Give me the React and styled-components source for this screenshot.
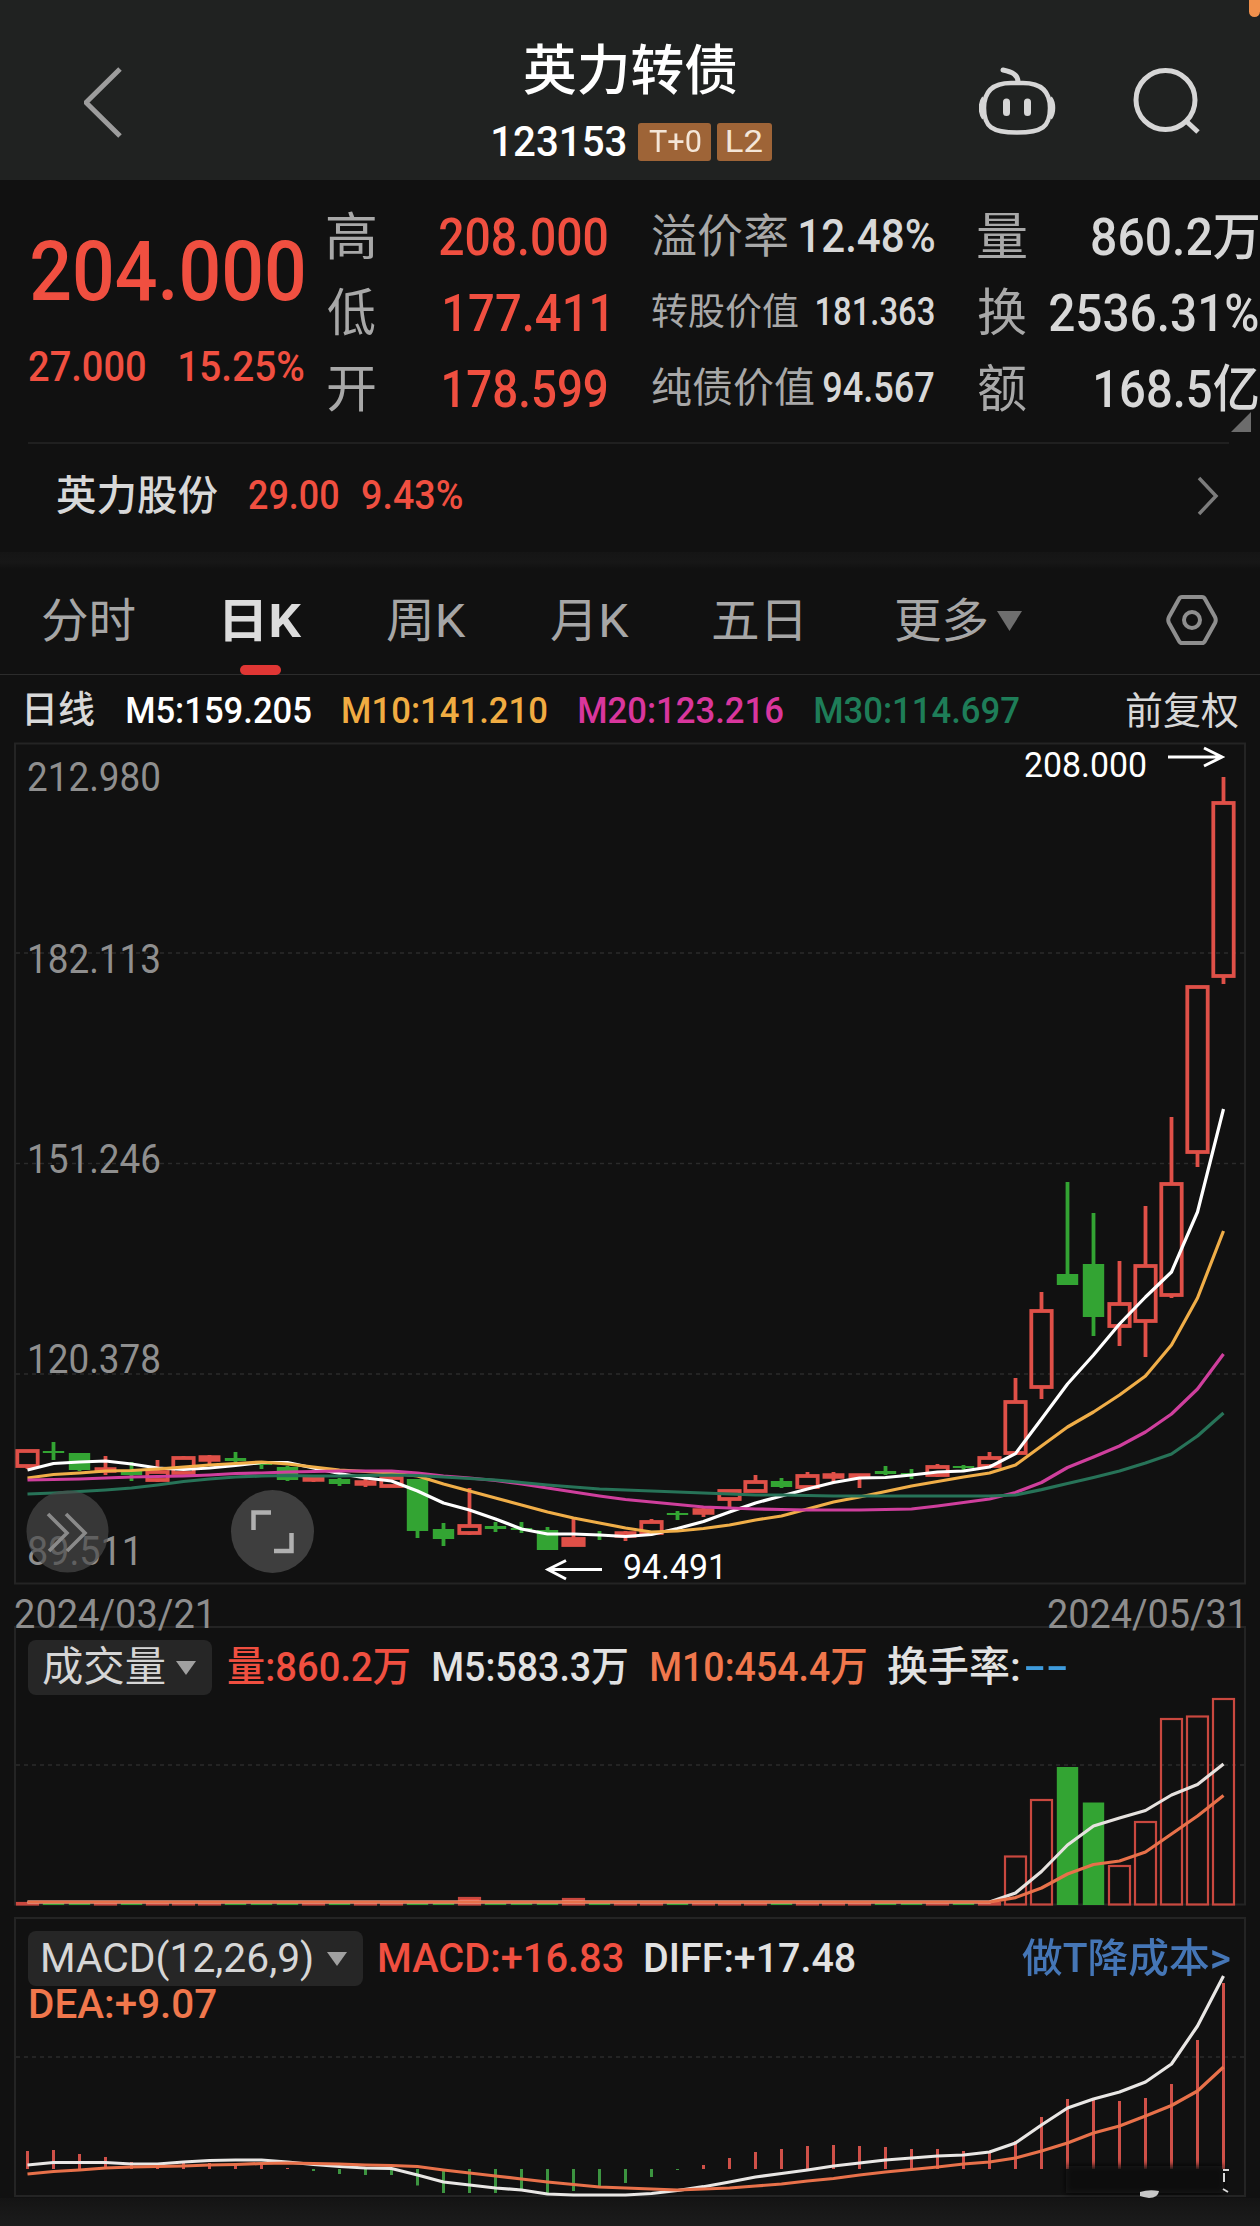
import React from 'react';
import styled, { createGlobalStyle } from "styled-components";

const FONT = 'Roboto, "Noto Sans CJK SC", sans-serif';
const RED = "#f04f40";
const CANDLE_RED = "#df5048";
const GREEN = "#33a433";
const ORANGE = "#f0774c";

const GlobalStyle = createGlobalStyle`
    body {
        margin: 0;
        background: #111111;
        font-family: ${FONT};
    }
`;

const Page = styled.div`
    width: 1260px;
    height: 2226px;
    overflow: hidden;
    display: flex;
    flex-direction: column;
    background: #111111;
    color: #d8d8d8;
`;

const FitBox = styled.span`
    display: block;
    flex: none;
    width: ${p => p.$width}px;
    margin-left: ${p => p.$ml || 0}px;
    color: ${p => p.$color || "inherit"};
    font-size: ${p => p.$size}px;
    font-weight: ${p => p.$weight};
    line-height: ${p => Math.round(p.$size * 1.1)}px;
    white-space: nowrap;
`;

const FitText = styled.span`
    display: block;
    transform-origin: left center;
`;

const pen = document.createElement("canvas").getContext("2d");

// condenses the text so that its ink fills exactly `width`
const Fit = ({ children, size, width, weight = 400, color, ml }) => {
    pen.font = `${weight} ${size}px ${FONT}`;
    const m = pen.measureText(children);
    const left = m.actualBoundingBoxLeft;
    const scale = width / (left + m.actualBoundingBoxRight);
    return (
        <FitBox $size={size} $width={width} $weight={weight} $color={color} $ml={ml}>
            <FitText style={{ transform: `scaleX(${scale}) translateX(${left}px)` }}>{children}</FitText>
        </FitBox>
    );
};

/* header */

const Header = styled.header`
    position: relative;
    height: 180px;
    flex: none;
    box-sizing: border-box;
    padding: 0 60px 0 84px;
    display: flex;
    justify-content: space-between;
    background: #202221;
`;

const HeaderIcon = styled.svg`
    margin-top: 60px;
    flex: none;
`;

const HeaderTitle = styled.div`
    display: flex;
    flex-direction: column;
    align-items: flex-start;
    margin-left: 164px;
    padding-top: 42px;
    color: #ffffff;
`;

const CodeRow = styled.div`
    display: flex;
    align-items: center;
    margin-top: 17px;
`;

const Badge = styled.div`
    width: ${p => p.$width}px;
    height: 38px;
    margin-left: ${p => p.$ml}px;
    border-radius: 3px;
    display: flex;
    align-items: center;
    justify-content: center;
    background: #9e6437;
    color: #f4e6d8;
`;

const HeaderTools = styled.div`
    display: flex;
    gap: 76px;
`;

const EdgeMark = styled.div`
    position: absolute;
    top: 0;
    right: 0;
    width: 11px;
    height: 17px;
    border-radius: 0 0 6px 6px;
    background: #f0904c;
`;

/* quote */

const Quote = styled.section`
    height: 262px;
    flex: none;
    display: flex;
    position: relative;
`;

const PriceCol = styled.div`
    width: 275px;
    margin: 46px 24px 0 29px;
    display: flex;
    flex-direction: column;
    gap: 27px;
    color: ${RED};
`;

const PriceRow = styled.div`
    display: flex;
    justify-content: space-between;
`;

const StatCol = styled.div`
    width: ${p => p.$width}px;
    margin-right: ${p => p.$mr || 0}px;
    padding-top: ${p => p.$pt || 20}px;
`;

const StatRow = styled.div`
    height: 76px;
    display: flex;
    align-items: center;
    justify-content: space-between;
`;

const Corner = styled.svg`
    position: absolute;
    right: 9px;
    bottom: 10px;
`;

const StockRow = styled.section`
    height: 110px;
    flex: none;
    box-sizing: border-box;
    margin: 0 31px 0 28px;
    padding: 0 10px 4px 29px;
    border-top: 2px solid #202020;
    display: flex;
    align-items: center;
`;

const Push = styled.div`
    flex: 1;
`;

const Band = styled.div`
    height: 17px;
    flex: none;
    background: linear-gradient(#151515, #171717 60%, #111111);
`;

/* tabs */

const Tabs = styled.nav`
    height: 106px;
    flex: none;
    box-sizing: border-box;
    padding: 0 42px 0 43px;
    border-bottom: 1px solid #2c2c2c;
    display: flex;
    align-items: center;
    color: #a6a6a6;
`;

const Tab = styled.div`
    position: relative;
    height: 100%;
    box-sizing: border-box;
    padding-bottom: 2px;
    display: flex;
    align-items: center;
    margin-left: ${p => p.$ml || 0}px;
    color: ${p => (p.$active ? "#dcdcdc" : "inherit")};
    &::after {
        content: "";
        display: ${p => (p.$active ? "block" : "none")};
        position: absolute;
        bottom: -1px;
        left: calc(50% - 24px);
        width: 41px;
        height: 10px;
        border-radius: 5px;
        background: #e03634;
    }
`;

const TabSetting = styled.svg`
    margin-bottom: 3px;
`;

const Indicators = styled.div`
    height: 67px;
    flex: none;
    box-sizing: border-box;
    padding: 4px 22px 0 27px;
    display: flex;
    align-items: center;
`;

/* charts */

const Panel = styled.section`
    display: grid;
    flex: none;
    margin-top: ${p => p.$mt || 0}px;
    & > * {
        grid-area: 1 / 1;
    }
`;

const Chart = styled.svg`
    display: block;
    flex: none;
    overflow: visible;
    width: 1260px;
    height: ${p => p.$height}px;
`;

const Dates = styled.div`
    height: 41px;
    flex: none;
    box-sizing: border-box;
    padding: 8px 19px 0 15px;
    display: flex;
    justify-content: space-between;
    color: #8d8d8d;
`;

const Legend = styled.div`
    padding: 14px 30px 0 28px;
`;

const LegendRow = styled.div`
    height: ${p => p.$height}px;
    display: flex;
    align-items: center;
`;

const Picker = styled.div`
    width: ${p => p.$width}px;
    height: 55px;
    box-sizing: border-box;
    padding: 0 16px 0 15px;
    border-radius: 8px;
    display: flex;
    align-items: center;
    justify-content: space-between;
    background: #262626;
    color: #d6d6d6;
`;

const Footer = styled.div`
    flex: 1;
    background: linear-gradient(#141414, #1c1c1c);
`;

const Down = ({ w, h, color }) => (
    <svg width={w} height={h}><path d={`M0 0H${w}L${w / 2} ${h}Z`} fill={color} /></svg>
);

// [up, high, bodyTop, bodyBottom, low]
const candles = [
    [1, 1451, 1451, 1466, 1469], [0, 1442, 1451, 1453, 1460], [0, 1453, 1453, 1470, 1471],
    [1, 1456, 1468, 1472, 1475], [0, 1462, 1471, 1475, 1481], [1, 1460, 1472, 1480, 1482],
    [1, 1456, 1458, 1473, 1474], [1, 1455, 1456, 1461, 1465], [0, 1452, 1458, 1461, 1462],
    [0, 1461, 1463, 1465, 1469], [0, 1466, 1467, 1480, 1481], [1, 1477, 1477, 1481, 1482],
    [0, 1478, 1479, 1484, 1486], [1, 1478, 1481, 1485, 1487], [1, 1475, 1478, 1486, 1487],
    [0, 1479, 1479, 1531, 1538], [0, 1523, 1529, 1539, 1546], [1, 1488, 1526, 1533, 1535],
    [0, 1522, 1526, 1529, 1532], [0, 1522, 1528, 1530, 1533], [0, 1527, 1530, 1550, 1550],
    [1, 1517, 1539, 1545, 1545], [0, 1531, 1534, 1536, 1540], [1, 1531, 1532, 1537, 1541],
    [1, 1519, 1522, 1533, 1534], [0, 1511, 1513, 1515, 1520], [1, 1506, 1509, 1514, 1517],
    [1, 1490, 1491, 1499, 1507], [1, 1475, 1482, 1491, 1492], [0, 1478, 1481, 1487, 1488],
    [1, 1472, 1476, 1487, 1489], [1, 1472, 1474, 1478, 1482], [1, 1474, 1474, 1478, 1488],
    [0, 1466, 1471, 1474, 1475], [0, 1469, 1473, 1475, 1479], [1, 1464, 1467, 1475, 1477],
    [0, 1465, 1466, 1468, 1471], [1, 1452, 1458, 1466, 1467], [1, 1378, 1402, 1453, 1455],
    [1, 1292, 1311, 1387, 1399], [0, 1182, 1274, 1285, 1285], [0, 1213, 1264, 1317, 1336],
    [1, 1261, 1304, 1326, 1346], [1, 1206, 1266, 1321, 1357], [1, 1117, 1184, 1295, 1298],
    [1, 987, 987, 1152, 1167], [1, 777, 803, 976, 984],
];

const ma5 = [1470, 1463.5, 1462, 1461, 1464, 1468, 1469.5, 1468, 1465.5, 1462.5, 1462.5, 1468, 1473.5, 1478, 1481, 1491, 1503, 1510, 1519, 1529, 1534, 1534, 1535, 1536.5, 1534.5, 1528.5, 1521.5, 1512, 1503, 1496, 1489, 1482.5, 1478, 1477.5, 1475, 1472, 1471, 1467, 1453.6, 1419, 1384, 1355, 1324, 1297, 1272, 1212, 1109];
const ma10 = [1478, 1474.5, 1473, 1471, 1470.5, 1469, 1467, 1465, 1463.5, 1462, 1464, 1467, 1470, 1471.5, 1473, 1476, 1484, 1491, 1498, 1505, 1512, 1518, 1523, 1528, 1532, 1531, 1528.5, 1525, 1520, 1516, 1509, 1502, 1497, 1491.5, 1486, 1481.5, 1477, 1473, 1465, 1446, 1427, 1412, 1395, 1376, 1345, 1298, 1231];
const ma20 = [1480, 1479.5, 1479, 1478, 1477, 1476.5, 1476, 1475, 1473.5, 1473, 1472, 1471.5, 1471, 1471, 1471, 1473, 1476, 1478, 1480.5, 1484, 1488, 1492, 1496, 1499.5, 1502, 1504.5, 1507, 1508, 1509, 1509.5, 1510, 1510, 1510, 1509.5, 1509, 1506, 1502.5, 1499, 1492.5, 1482.5, 1467.5, 1457, 1446, 1432, 1414, 1389, 1354];
const ma30 = [1494, 1493, 1491.5, 1490, 1488, 1485, 1481.5, 1479, 1477, 1476, 1475.5, 1476, 1476, 1475.5, 1475, 1475.5, 1477, 1478.5, 1480, 1482.5, 1485, 1487, 1489, 1490, 1491, 1492, 1493, 1494, 1495, 1495, 1495.5, 1496, 1496, 1496, 1496, 1496, 1496, 1496, 1495, 1489.6, 1483.5, 1477.5, 1471, 1463, 1454, 1436, 1413];

const flat = Array(38).fill(1902);
const volM5 = [...flat, 1893, 1871.5, 1845, 1826, 1818, 1810.5, 1795, 1784.5, 1764];
const volM10 = [...flat, 1897.6, 1888, 1874, 1864.5, 1861, 1852, 1834, 1816, 1795.6];
const volTops = { 17: 1898, 21: 1899, 38: 1856.5, 39: 1800, 40: 1767, 41: 1802.5, 42: 1866, 43: 1822, 44: 1719, 45: 1716.5, 46: 1699 };

const macd = [2151, 2150, 2154, 2157, 2162, 2165, 2163, 2163, 2164, 2164, 2168, 2171, 2174, 2175, 2175, 2185.5, 2193, 2193, 2193, 2190, 2193, 2191, 2186, 2183, 2177, 2170, 2165, 2158, 2152, 2149, 2146, 2145, 2146, 2147, 2149, 2149, 2151, 2152, 2141, 2117, 2099, 2100, 2101, 2098, 2084, 2040, 1983];
const diff = [2165, 2162.5, 2162.5, 2162.5, 2164, 2164, 2162, 2160.5, 2160, 2160, 2162, 2164.5, 2166.5, 2168, 2168.5, 2175, 2182, 2185, 2188, 2190, 2194, 2195, 2195, 2195, 2193.5, 2190.5, 2186.7, 2182, 2177, 2173.5, 2170, 2166, 2163, 2160, 2158, 2156, 2155, 2152, 2143, 2125, 2108, 2099, 2092, 2082, 2064, 2026, 1976];
const dea = [2174, 2171.5, 2170, 2168, 2167, 2166.5, 2166, 2165, 2164.5, 2163.5, 2163, 2163.5, 2164, 2165, 2165.5, 2166.5, 2170, 2173, 2176, 2179, 2182, 2184.5, 2187, 2188, 2189, 2190, 2189, 2188, 2186, 2184, 2181, 2178.5, 2175, 2172, 2169.5, 2167, 2164, 2162, 2158, 2151, 2143, 2133, 2126, 2116, 2105.5, 2091, 2067];

const cx = i => 27.5 + i * 26;

const Line = ({ data, color }) => (
    <polyline points={data.map((y, i) => `${cx(i)},${y}`).join(" ")} fill="none" stroke={color} strokeWidth="3.2" strokeLinejoin="round" />
);

const Grid = ({ y }) => (
    <line x1="16" x2="1244" y1={y} y2={y} stroke="#2b2b2b" strokeWidth="1.5" strokeDasharray="4 4" />
);

const Frame = ({ y, h }) => (
    <rect x="15" y={y} width="1230" height={h} fill="none" stroke="#242424" strokeWidth="2" />
);

const Label = ({ x, y, width, color = "#8f8f8f", size = 40, children }) => (
    <text x={x} y={y} textLength={width} lengthAdjust="spacingAndGlyphs" fill={color} fontSize={size}>{children}</text>
);

const Candle = ({ i, d: [up, high, top, bottom, low] }) => {
    const x = cx(i);
    const color = up ? CANDLE_RED : GREEN;
    return (
        <g stroke={color} strokeWidth="3.8">
            <path d={`M${x} ${high}V${top}M${x} ${bottom}V${low}`} />
            {up ?
                <rect x={x - 10.2} y={top} width="20.4" height={bottom - top} fill={bottom - top < 7 ? color : "none"} strokeWidth={bottom - top < 6 ? 1.5 : 3.8} />
                :
                <rect x={x - 10.7} y={top} width="21.4" height={bottom - top} fill={color} stroke="none" />
            }
        </g>
    );
};

const PriceChart = () => (
    <Chart viewBox="0 742 1260 843" $height={843}>
        <Frame y={743.5} h={840} />
        <Grid y={953} />
        <Grid y={1163.5} />
        <Grid y={1374} />
        {candles.map((d, i) => <Candle key={i} i={i} d={d} />)}
        <Line data={ma5} color="#ffffff" />
        <Line data={ma10} color="#f0ae48" />
        <Line data={ma20} color="#cf3f9d" />
        <Line data={ma30} color="#277358" />
        <Label x={27} y={791} width={134}>212.980</Label>
        <Label x={27} y={973} width={134}>182.113</Label>
        <Label x={27} y={1173} width={134}>151.246</Label>
        <Label x={27} y={1373} width={134}>120.378</Label>
        <Label x={27} y={1565} width={116}>89.511</Label>
        <Label x={1024} y={777} width={123} size={35} color="#ffffff">208.000</Label>
        <path d="M1168 757H1222M1204 748L1222 757L1204 766" fill="none" stroke="#fff" strokeWidth="3" />
        <Label x={623} y={1579} width={104} size={35} color="#ffffff">94.491</Label>
        <path d="M602 1569.500H548M566 1560.500L548 1569.500L566 1579" fill="none" stroke="#fff" strokeWidth="3" />
        <circle cx="67.500" cy="1531.500" r="41" fill="#4a4a4a" opacity="0.68" />
        <path d="M48 1514L67 1533L49 1551M66 1514L85 1533L67 1551" fill="none" stroke="#8a8a8a" strokeWidth="3.600" />
        <circle cx="272.500" cy="1531.500" r="41.500" fill="#3e3e3e" />
        <path d="M253.500 1530V1512.500H271M291.500 1533V1551H274" fill="none" stroke="#b0b0b0" strokeWidth="4.500" />
    </Chart>
);

const VolumeChart = () => (
    <Chart viewBox="0 1626 1260 280" $height={280}>
        <Frame y={1627} h={277.500} />
        <Grid y={1765} />
        {candles.map(([up], i) => {
            const top = volTops[i] || 1903;
            return up ?
                <rect key={i} x={cx(i) - 10.5} y={top} width="21" height={1904.5 - top} fill={volTops[i] > 1890 ? RED : "none"} stroke="#c9483f" strokeWidth="2.2" />
                :
                <rect key={i} x={cx(i) - 10.7} y={top} width="21.4" height={1905 - top} fill={GREEN} />;
        })}
        <Line data={volM5} color="#e6e2df" />
        <Line data={volM10} color="#e8714a" />
    </Chart>
);

const MacdChart = () => (
    <Chart viewBox="0 1917 1260 281" $height={281}>
        <defs>
            <filter id="soft" x="-20%" y="-50%" width="140%" height="200%"><feGaussianBlur stdDeviation="3" /></filter>
        </defs>
        <Frame y={1918} h={278} />
        <Grid y={2057} />
        {macd.map((y, i) => (
            <line key={i} x1={cx(i)} x2={cx(i)} y1={y} y2="2169" stroke={y > 2169 ? "#3c9440" : "#cf5048"} strokeWidth="3" />
        ))}
        <Line data={diff} color="#e9e7e5" />
        <Line data={dea} color="#e8714a" />
        <rect x="1066" y="2166" width="158" height="27" fill="#0c0c0c" filter="url(#soft)" />
        <path d="M1223 2170H1229M1224 2173V2182M1223 2189L1228 2192" stroke="#d8d8d8" strokeWidth="2" />
        <path d="M1140 2192Q1149 2189 1159 2191Q1158 2198 1149 2198Q1143 2197 1140 2196Z" fill="#c8c8c8" />
    </Chart>
);

export default () => {
    return (
        <Page>
            <GlobalStyle />
            <Header>
                <HeaderIcon width="38" height="84" viewBox="84 60 38 84">
                    <path d="M120 69L86 102.500L120 136" fill="none" stroke="#9d9d9d" strokeWidth="5" />
                </HeaderIcon>
                <HeaderTitle>
                    <Fit size={54} width={212} weight={500} ml={31}>英力转债</Fit>
                    <CodeRow>
                        <Fit size={43} width={133} weight={500}>123153</Fit>
                        <Badge $width={73} $ml={12}><Fit size={32} width={52}>T+0</Fit></Badge>
                        <Badge $width={55} $ml={6}><Fit size={32} width={35}>L2</Fit></Badge>
                    </CodeRow>
                </HeaderTitle>
                <HeaderTools>
                    <HeaderIcon width="78" height="84" viewBox="979 60 78 84" fill="none" stroke="#d6d6d6" strokeWidth="4.5">
                        <path d="M1011 83H1023C1041 83 1050 91 1050 108C1050 127 1042 132.500 1017 132.500C992 132.500 984 127 984 108C984 91 993 83 1011 83Z" />
                        <path d="M984 98C980 103 980 113 984 118M1050 98C1054 103 1054 113 1050 118" />
                        <path d="M1018 82C1018 75 1013 72 1003 70" strokeWidth="5" strokeLinecap="round" />
                        <path d="M1006.500 102V112.500M1027.500 102V112.500" strokeWidth="7" strokeLinecap="round" />
                    </HeaderIcon>
                    <HeaderIcon width="67" height="84" viewBox="1132 60 67 84" fill="none" stroke="#d6d6d6" strokeWidth="5">
                        <circle cx="1164.500" cy="100" r="29.500" />
                        <path d="M1184 120L1197 132" />
                    </HeaderIcon>
                </HeaderTools>
                <EdgeMark />
            </Header>

            <Quote>
                <PriceCol>
                    <Fit size={83} width={271} weight={500} ml={3}>204.000</Fit>
                    <PriceRow>
                        <Fit size={42} width={116} weight={500}>27.000</Fit>
                        <Fit size={42} width={124} weight={500}>15.25%</Fit>
                    </PriceRow>
                </PriceCol>
                <StatCol $width={279} $mr={45}>
                    <StatRow><Fit size={51} width={47} color="#a8a8a8">高</Fit><Fit size={51} width={167} color={RED} weight={500}>208.000</Fit></StatRow>
                    <StatRow><Fit size={51} width={47} color="#a8a8a8">低</Fit><Fit size={51} width={162} color={RED} weight={500}>177.411</Fit></StatRow>
                    <StatRow><Fit size={51} width={47} color="#a8a8a8">开</Fit><Fit size={51} width={163} color={RED} weight={500}>178.599</Fit></StatRow>
                </StatCol>
                <StatCol $width={282} $mr={44} $pt={18}>
                    <StatRow><Fit size={46} width={135} color="#a8a8a8">溢价率</Fit><Fit size={46} width={134} weight={500}>12.48%</Fit></StatRow>
                    <StatRow><Fit size={37} width={146} color="#a8a8a8">转股价值</Fit><Fit size={38} width={117} weight={500}>181.363</Fit></StatRow>
                    <StatRow><Fit size={41} width={162} color="#a8a8a8">纯债价值</Fit><Fit size={42} width={111} weight={500}>94.567</Fit></StatRow>
                </StatCol>
                <StatCol $width={280}>
                    <StatRow><Fit size={51} width={48} color="#a8a8a8">量</Fit><Fit size={51} width={166} weight={500}>860.2万</Fit></StatRow>
                    <StatRow><Fit size={51} width={48} color="#a8a8a8">换</Fit><Fit size={51} width={208} weight={500}>2536.31%</Fit></StatRow>
                    <StatRow><Fit size={51} width={48} color="#a8a8a8">额</Fit><Fit size={51} width={162} weight={500}>168.5亿</Fit></StatRow>
                </StatCol>
                <Corner width="20" height="20"><path d="M20 0V20H0Z" fill="#6c6c6c" /></Corner>
            </Quote>

            <StockRow>
                <Fit size={41} width={161} weight={500}>英力股份</Fit>
                <Fit size={40} width={89} color={RED} ml={31} weight={500}>29.00</Fit>
                <Fit size={40} width={100} color={RED} ml={24} weight={500}>9.43%</Fit>
                <Push />
                <svg width="22" height="40"><path d="M2 2L19 20L2 38" fill="none" stroke="#7c7c7c" strokeWidth="3.5" /></svg>
            </StockRow>
            <Band />

            <Tabs>
                <Tab><Fit size={47} width={92}>分时</Fit></Tab>
                <Tab $ml={90} $active><Fit size={47} width={77} weight={700}>日K</Fit></Tab>
                <Tab $ml={85}><Fit size={47} width={79}>周K</Fit></Tab>
                <Tab $ml={85}><Fit size={47} width={78}>月K</Fit></Tab>
                <Tab $ml={84}><Fit size={47} width={88}>五日</Fit></Tab>
                <Tab $ml={95}><Fit size={47} width={91}>更多</Fit></Tab>
                <Tab $ml={10}><Down w={25} h={20} color="#6e6e6e" /></Tab>
                <Push />
                <TabSetting width="52" height="52" viewBox="0 0 52 52" fill="none" stroke="#8e8e8e" strokeWidth="4">
                    <path d="M16 3H36Q38 3 39 5L49 23Q50.500 26 49 29L39 47Q38 49 36 49H16Q14 49 13 47L3 29Q1.500 26 3 23L13 5Q14 3 16 3Z" />
                    <circle cx="26" cy="26" r="8" />
                </TabSetting>
            </Tabs>

            <Indicators>
                <Fit size={37} width={67} weight={500}>日线</Fit>
                <Fit size={37} width={184} color="#ffffff" ml={33} weight={500}>M5:159.205</Fit>
                <Fit size={37} width={204} color="#f0ac42" ml={32} weight={500}>M10:141.210</Fit>
                <Fit size={37} width={204} color="#d9369d" ml={32} weight={500}>M20:123.216</Fit>
                <Fit size={37} width={204} color="#1e7d58" ml={32} weight={500}>M30:114.697</Fit>
                <Push />
                <Fit size={38} width={111}>前复权</Fit>
            </Indicators>

            <PriceChart />

            <Dates>
                <Fit size={40} width={194}>2024/03/21</Fit>
                <Fit size={40} width={193}>2024/05/31</Fit>
            </Dates>

            <Panel>
                <VolumeChart />
                <Legend>
                    <LegendRow $height={55}>
                        <Picker $width={184}>
                            <Fit size={41} width={122}>成交量</Fit>
                            <Down w={20} h={14} color="#a0a0a0" />
                        </Picker>
                        <Fit size={41} width={181} color={RED} ml={16} weight={500}>量:860.2万</Fit>
                        <Fit size={41} width={194} color="#e2e2e2" ml={24} weight={500}>M5:583.3万</Fit>
                        <Fit size={41} width={215} color={ORANGE} ml={24} weight={500}>M10:454.4万</Fit>
                        <Fit size={41} width={131} color="#e2e2e2" ml={22} weight={500}>换手率:</Fit>
                        <Fit size={41} width={42} color="#3f9bdc" ml={6} weight={500}>--</Fit>
                    </LegendRow>
                </Legend>
            </Panel>

            <Panel $mt={11}>
                <MacdChart />
                <Legend>
                    <LegendRow $height={55}>
                        <Picker $width={335}>
                            <Fit size={41} width={269}>MACD(12,26,9)</Fit>
                            <Down w={20} h={14} color="#a0a0a0" />
                        </Picker>
                        <Fit size={41} width={244} color={RED} ml={16} weight={500}>MACD:+16.83</Fit>
                        <Fit size={41} width={210} color="#e2e2e2" ml={22} weight={500}>DIFF:+17.48</Fit>
                        <Push />
                        <Fit size={40} width={208} color="#4576b6" weight={500}>做T降成本&gt;</Fit>
                    </LegendRow>
                    <LegendRow $height={36}>
                        <Fit size={41} width={186} color={ORANGE} ml={2} weight={500}>DEA:+9.07</Fit>
                    </LegendRow>
                </Legend>
            </Panel>
            <Footer />
        </Page>
    )
}
